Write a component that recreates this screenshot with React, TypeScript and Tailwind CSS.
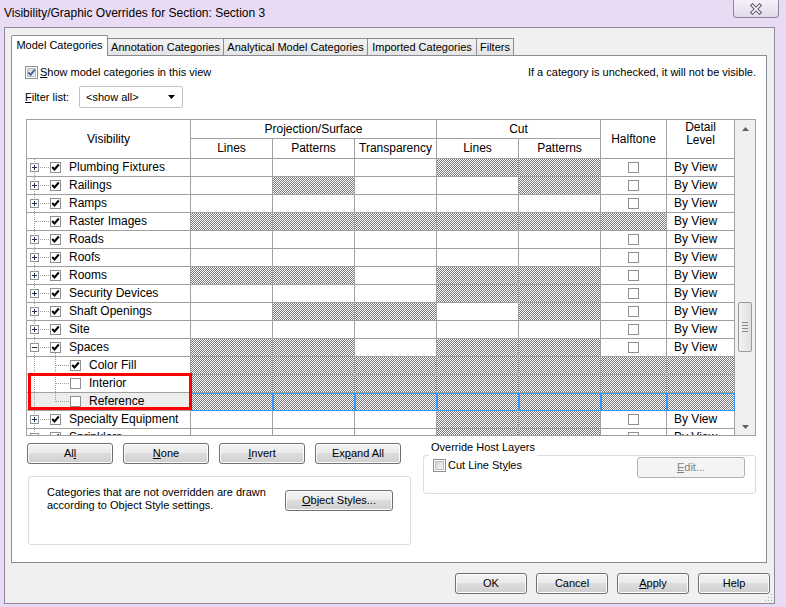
import React from "react";

type Row = {
  name: string;
  child?: boolean;
  toggle?: "+" | "-" | null;
  checked: boolean;
  hatch: number[];
  selected?: boolean;
  last?: boolean;
};

const HATCH =
  "bg-[#bcbcbc] bg-[image:repeating-conic-gradient(#7a7a7a_0%_25%,#ffffff_0%_50%)] bg-[length:2px_2px]";
const GRID_COLS = "grid grid-cols-[164px_82px_82px_82px_82px_82px_66px_68px]";
const ALL = [1, 2, 3, 4, 5, 6, 7];

const rows: Row[] = [
  { name: "Plumbing Fixtures", toggle: "+", checked: true, hatch: [4, 5] },
  { name: "Railings", toggle: "+", checked: true, hatch: [2, 5] },
  { name: "Ramps", toggle: "+", checked: true, hatch: [] },
  { name: "Raster Images", toggle: null, checked: true, hatch: [1, 2, 3, 4, 5, 6] },
  { name: "Roads", toggle: "+", checked: true, hatch: [] },
  { name: "Roofs", toggle: "+", checked: true, hatch: [] },
  { name: "Rooms", toggle: "+", checked: true, hatch: [1, 2, 4, 5] },
  { name: "Security Devices", toggle: "+", checked: true, hatch: [4, 5] },
  { name: "Shaft Openings", toggle: "+", checked: true, hatch: [2, 3, 5] },
  { name: "Site", toggle: "+", checked: true, hatch: [] },
  { name: "Spaces", toggle: "-", checked: true, hatch: [1, 2, 4, 5] },
  { name: "Color Fill", child: true, checked: true, hatch: ALL },
  { name: "Interior", child: true, checked: false, hatch: ALL },
  { name: "Reference", child: true, checked: false, hatch: ALL, selected: true, last: true },
  { name: "Specialty Equipment", toggle: "+", checked: true, hatch: [4, 5] },
  { name: "Sprinklers", toggle: "+", checked: true, hatch: [4, 5] },
];

function WinCheck({ checked }: { checked?: boolean }) {
  return (
    <span className="w-[13px] h-[13px] border border-[#8e8f8f] bg-white p-[1px] flex shrink-0">
      <span className="flex-1 flex items-center justify-center bg-[linear-gradient(135deg,#cfd3d8,#f7f7f7)] shadow-[inset_0_0_0_1px_#b9bec4]">
        {checked && (
          <svg width="9" height="9" viewBox="0 0 9 9">
            <path d="M1.3 4.4 L3.6 6.8 L7.8 1.6" fill="none" stroke="#4a5f97" strokeWidth="1.8" />
          </svg>
        )}
      </span>
    </span>
  );
}

function GridCheck({ checked }: { checked: boolean }) {
  return (
    <span className="w-[11px] h-[11px] border border-[#8f8f8f] bg-white flex items-center justify-center shrink-0">
      {checked && (
        <svg width="9" height="9" viewBox="0 0 9 9">
          <path d="M1.2 4 L3.5 6.5 L7.8 1.5" fill="none" stroke="#000" strokeWidth="2" />
        </svg>
      )}
    </span>
  );
}

function Toggle({ sign }: { sign: "+" | "-" }) {
  return (
    <span className="relative w-[9px] h-[9px] border border-[#919191] bg-white flex items-center justify-center shrink-0">
      <svg width="7" height="7" viewBox="0 0 7 7">
        <path d={sign === "+" ? "M1 3.5H6M3.5 1V6" : "M1 3.5H6"} stroke="#1f2f4a" strokeWidth="1" />
      </svg>
    </span>
  );
}

function Btn({
  children,
  className = "",
  disabled = false,
}: {
  children: React.ReactNode;
  className?: string;
  disabled?: boolean;
}) {
  return (
    <div
      className={`h-[21px] rounded-[3px] border flex items-center justify-center shrink-0 ${
        disabled
          ? "border-[#adb2b5] bg-[#f4f4f4] text-[#838383]"
          : "border-[#707070] bg-[linear-gradient(#f2f2f2_0%,#ebebeb_45%,#dddddd_50%,#cfcfcf_100%)] shadow-[inset_0_0_0_1px_#fcfcfc]"
      } ${className}`}
    >
      {children}
    </div>
  );
}

function VisCell({ row }: { row: Row }) {
  return (
    <div
      className={`relative flex items-center border-r border-b border-[#a0a0a0] ${
        row.selected ? "bg-[#ededed]" : "bg-white"
      } ${row.child ? "pl-[43px]" : "pl-[3px]"}`}
    >
      {/* tree lines */}
      <span className="absolute left-[7px] top-0 bottom-0 border-l border-dotted border-[#a0a0a0]" />
      {row.child ? (
        <>
          <span
            className={`absolute left-[28px] top-0 border-l border-dotted border-[#a0a0a0] ${
              row.last ? "h-[9px]" : "bottom-0"
            }`}
          />
          <span className="absolute left-[29px] top-[8px] w-[13px] border-t border-dotted border-[#a0a0a0]" />
        </>
      ) : (
        <span className="absolute left-[8px] top-[8px] w-[14px] border-t border-dotted border-[#a0a0a0]" />
      )}
      {row.toggle === "-" && (
        <span className="absolute left-[28px] top-[14px] bottom-0 border-l border-dotted border-[#a0a0a0]" />
      )}

      {!row.child && (row.toggle ? <Toggle sign={row.toggle} /> : <span className="w-[9px] shrink-0" />)}
      <span className={`relative ${row.child ? "" : "ml-[11px]"}`}>
        <GridCheck checked={row.checked} />
      </span>
      <span className="relative ml-[8px] whitespace-nowrap">{row.name}</span>
    </div>
  );
}

function GridRow({ row }: { row: Row }) {
  return (
    <div className={`${GRID_COLS} h-[18px]`}>
      <VisCell row={row} />
      {ALL.map((c) => {
        const hatched = row.hatch.includes(c);
        return (
          <div
            key={c}
            className={`relative flex items-center border-r border-b border-[#a0a0a0] ${hatched ? HATCH : "bg-white"} ${
              c === 6 ? "justify-center" : ""
            } ${c === 7 ? "pl-[7px]" : ""}`}
          >
            {!hatched && c === 6 && <GridCheck checked={false} />}
            {!hatched && c === 7 && <span className="whitespace-nowrap">By View</span>}
            {/* selection outline */}
            {row.selected && (
              <>
                <span className="absolute top-0 left-0 -right-[1px] h-[1px] bg-[#3399ff]" />
                <span className="absolute -bottom-[1px] left-0 -right-[1px] h-[1px] bg-[#3399ff]" />
                <span className="absolute top-0 left-0 -bottom-[1px] w-[1px] bg-[#3399ff]" />
                <span className="absolute top-0 -right-[1px] -bottom-[1px] w-[1px] bg-[#3399ff]" />
              </>
            )}
          </div>
        );
      })}
    </div>
  );
}

function Header() {
  const cell = "border-r border-b border-[#a0a0a0] flex items-center justify-center";
  return (
    <div className={`${GRID_COLS} grid-rows-[19px_20px] bg-white`}>
      <div className={`${cell} row-span-2`}>Visibility</div>
      <div className={`${cell} col-span-3`}>Projection/Surface</div>
      <div className={`${cell} col-span-2`}>Cut</div>
      <div className={`${cell} row-span-2`}>Halftone</div>
      <div className="row-span-2 border-r border-b border-[#a0a0a0] flex flex-col items-center pt-[1px] leading-[13px]">
        <span>Detail</span>
        <span>Level</span>
      </div>
      <div className={cell}>Lines</div>
      <div className={cell}>Patterns</div>
      <div className={cell}>Transparency</div>
      <div className={cell}>Lines</div>
      <div className={cell}>Patterns</div>
    </div>
  );
}

function ScrollBar() {
  return (
    <div className="flex-1 flex flex-col bg-[#f0f0f0]">
      <div className="h-[17px] flex items-center justify-center">
        <svg width="7" height="4" viewBox="0 0 7 4">
          <path d="M0 4 L3.5 0 L7 4Z" fill="#606060" />
        </svg>
      </div>
      <div className="h-[165px]" />
      <div className="mx-[3px] h-[50px] rounded-[2px] border border-[#9a9a9a] bg-[linear-gradient(90deg,#f3f3f3,#e0e0e0)] flex flex-col items-center justify-center gap-[2px]">
        <span className="w-[6px] h-[1px] bg-[#8a8a8a]" />
        <span className="w-[6px] h-[1px] bg-[#8a8a8a]" />
        <span className="w-[6px] h-[1px] bg-[#8a8a8a]" />
        <span className="w-[6px] h-[1px] bg-[#8a8a8a]" />
      </div>
      <div className="flex-1" />
      <div className="h-[17px] flex items-center justify-center">
        <svg width="7" height="4" viewBox="0 0 7 4">
          <path d="M0 0 L3.5 4 L7 0Z" fill="#606060" />
        </svg>
      </div>
    </div>
  );
}

function Grid() {
  return (
    <div className="ml-[1px] mt-[11px] w-[730px] h-[317px] border border-[#a0a0a0] flex bg-white text-[12px]">
      <div className="w-[708px] flex flex-col">
        <Header />
        <div className="relative flex-1 overflow-hidden">
          {rows.map((r) => (
            <GridRow key={r.name} row={r} />
          ))}
          {/* red highlight */}
          <div className="absolute left-[1px] top-[214px] w-[164px] h-[37px] border-[3px] border-[#ff0000]" />
        </div>
      </div>
      <ScrollBar />
    </div>
  );
}

export default function App() {
  return (
    <div className="w-[786px] h-[607px] bg-[#eadbf4] flex flex-col overflow-hidden text-[11px] leading-[15px] text-black font-['Liberation_Sans',Arial,sans-serif]">
      {/* title bar */}
      <div className="h-[27px] flex items-start justify-between pl-[4px] pr-[7px] shrink-0">
        <span className="mt-[5px] leading-[16px] text-[12px]">Visibility/Graphic Overrides for Section: Section 3</span>
        <div className="w-[46px] h-[18px] rounded-b-[4px] border border-t-0 border-[#8b879a] bg-[linear-gradient(#f7f1fb,#e2d9ea)] flex items-center justify-center">
          <svg width="14" height="12" viewBox="0 0 14 12">
            <path d="M3.5 2.5 L10.5 9.5 M10.5 2.5 L3.5 9.5" stroke="#55556a" strokeWidth="3.6" strokeLinecap="square" />
            <path d="M3.5 2.5 L10.5 9.5 M10.5 2.5 L3.5 9.5" stroke="#ffffff" strokeWidth="1.6" strokeLinecap="square" />
          </svg>
        </div>
      </div>

      {/* client area */}
      <div className="relative flex-1 flex flex-col ml-[4px] mr-[11px] mb-[3px] border border-[#8d8b9b] bg-[#f0f0f0] pt-[7px] pl-[6px] pr-[4px] pb-[9px]">
        {/* tabs */}
        <div className="h-[21px] flex items-end shrink-0">
          <div className="relative z-10 h-[21px] w-[97px] bg-white border border-b-0 border-[#898c95] rounded-t-[2px] flex items-center justify-center pb-[2px]">
            Model Categories
          </div>
          <div className="-ml-[1px] h-[18px] w-[117px] border border-b-0 border-[#898c95] bg-[linear-gradient(#f3f3f3,#e3e3e3)] flex items-center justify-center">
            Annotation Categories
          </div>
          <div className="-ml-[1px] h-[18px] w-[145px] border border-b-0 border-[#898c95] bg-[linear-gradient(#f3f3f3,#e3e3e3)] flex items-center justify-center">
            Analytical Model Categories
          </div>
          <div className="-ml-[1px] h-[18px] w-[110px] border border-b-0 border-[#898c95] bg-[linear-gradient(#f3f3f3,#e3e3e3)] flex items-center justify-center">
            Imported Categories
          </div>
          <div className="-ml-[1px] h-[18px] w-[38px] border border-b-0 border-[#898c95] bg-[linear-gradient(#f3f3f3,#e3e3e3)] flex items-center justify-center">
            Filters
          </div>
        </div>

        {/* tab page */}
        <div className="-mt-[1px] mr-[3px] flex-1 border border-[#898c95] bg-white flex flex-col pl-[13px] pr-[10px]">
          <div className="mt-[8px] h-[16px] flex items-center justify-between">
            <div className="flex items-center">
              <WinCheck checked />
              <span className="ml-[2px]">
                <span className="underline">S</span>how model categories in this view
              </span>
            </div>
            <span>If a category is unchecked, it will not be visible.</span>
          </div>

          <div className="mt-[6px] h-[22px] flex items-center">
            <span className="w-[54px]">
              <span className="underline">F</span>ilter list:
            </span>
            <div className="w-[104px] h-[22px] border border-[#c3c3c3] rounded-[2px] bg-white flex items-center justify-between pl-[6px] pr-[7px]">
              <span>&lt;show all&gt;</span>
              <svg width="7" height="4" viewBox="0 0 7 4">
                <path d="M0 0 H7 L3.5 4Z" fill="#000" />
              </svg>
            </div>
          </div>

          <Grid />

          <div className="flex">
            <div className="w-[386px] shrink-0">
              <div className="mt-[7px] ml-[2px] flex gap-[10px]">
                <Btn className="w-[86px]">
                  Al<span className="underline">l</span>
                </Btn>
                <Btn className="w-[86px]">
                  <span className="underline">N</span>one
                </Btn>
                <Btn className="w-[86px]">
                  <span className="underline">I</span>nvert
                </Btn>
                <Btn className="w-[86px]">
                  Ex<span className="underline">p</span>and All
                </Btn>
              </div>
              <div className="mt-[12px] ml-[3px] w-[383px] h-[69px] border border-[#d5dfe5] rounded-[3px] flex items-start pl-[18px] pr-[17px]">
                <p className="mt-[9px] leading-[13px]">
                  Categories that are not overridden are drawn
                  <br />
                  according to Object Style settings.
                </p>
                <Btn className="ml-auto mt-[13px] w-[108px]">
                  <span className="underline">O</span>bject Styles...
                </Btn>
              </div>
            </div>

            <div className="relative ml-[12px] mt-[19px] w-[334px] h-[39px] border border-[#d5dfe5] rounded-[3px] flex items-start justify-between pl-[9px] pr-[10px] pt-[1px]">
              <span className="absolute left-[5px] -top-[16px] h-[17px] leading-[15px] bg-white px-[2px]">
                Override Host Layers
              </span>
              <div className="mt-[1px] flex items-center">
                <WinCheck />
                <span className="ml-[2px]">
                  Cut Line St<span className="underline">y</span>les
                </span>
              </div>
              <Btn disabled className="w-[108px]">
                <span className="underline">E</span>dit...
              </Btn>
            </div>
          </div>
        </div>

        {/* dialog buttons */}
        <div className="mt-[10px] flex justify-end gap-[9px] shrink-0">
          <Btn className="w-[72px]">OK</Btn>
          <Btn className="w-[72px]">Cancel</Btn>
          <Btn className="w-[72px]">
            <span className="underline">A</span>pply
          </Btn>
          <Btn className="w-[72px]">Help</Btn>
        </div>

        {/* size grip */}
        <svg className="absolute right-[1px] bottom-[1px]" width="10" height="10" viewBox="0 0 10 10">
          <rect x="8" y="2" width="1" height="1" fill="#b0b0b0" />
          <rect x="5" y="5" width="1" height="1" fill="#b0b0b0" />
          <rect x="8" y="5" width="1" height="1" fill="#b0b0b0" />
          <rect x="2" y="8" width="1" height="1" fill="#b0b0b0" />
          <rect x="5" y="8" width="1" height="1" fill="#b0b0b0" />
          <rect x="8" y="8" width="1" height="1" fill="#b0b0b0" />
        </svg>
      </div>
    </div>
  );
}
